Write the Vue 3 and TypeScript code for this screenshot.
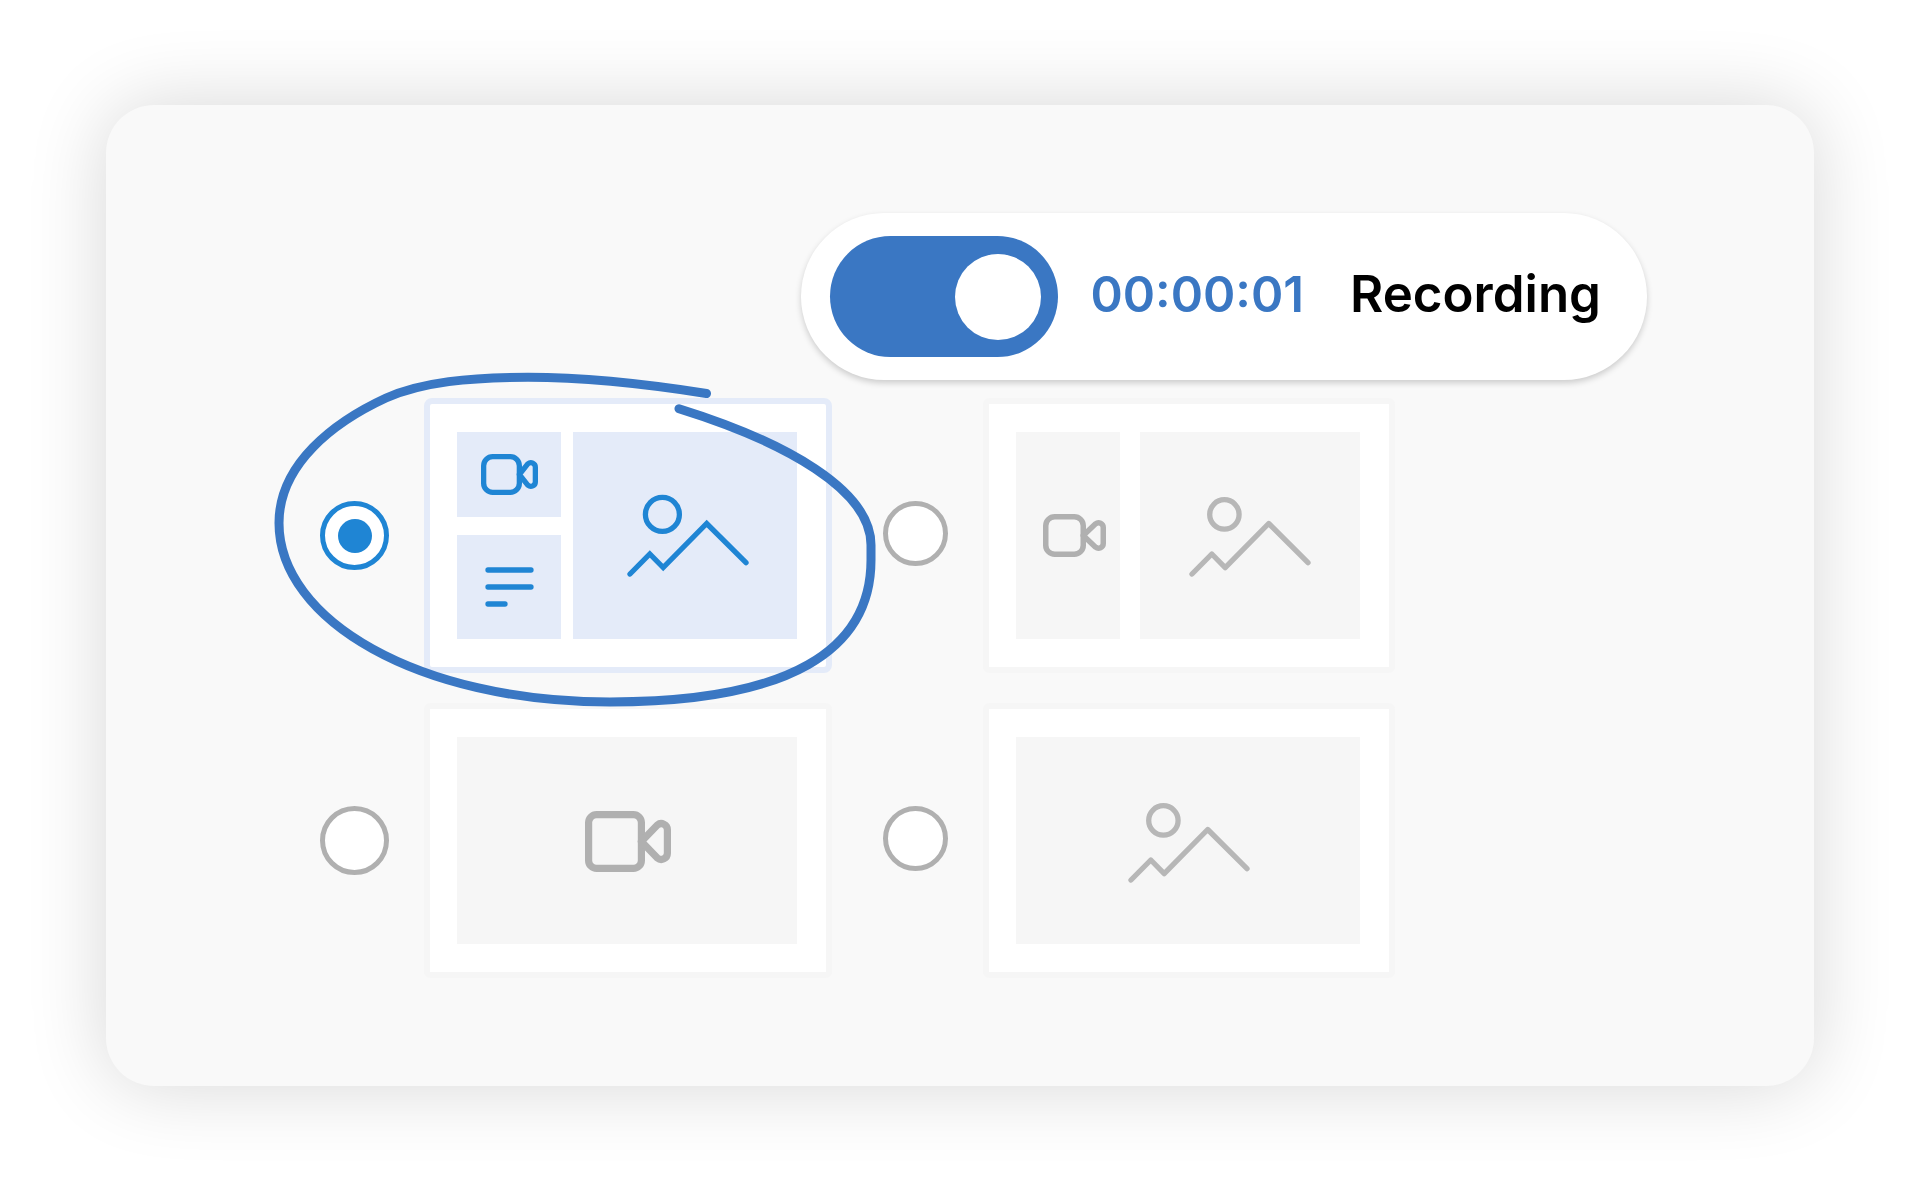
<script setup lang="ts">
import { ref } from 'vue'

type PaneKind = 'video' | 'text' | 'image'

interface VideoShape {
  width: number
  height: number
  body: number
  radius: number
  lens: number
  stroke: number
}

interface Pane {
  kind: PaneKind
  area: string
  video?: VideoShape
}

interface LayoutOption {
  id: string
  label: string
  shape: string
  panes: Pane[]
}

const smallVideo: VideoShape = { width: 57, height: 41, body: 41, radius: 9, lens: 29, stroke: 5.3 }
const mediumVideo: VideoShape = { width: 63, height: 43, body: 43, radius: 9, lens: 31, stroke: 5.5 }
const largeVideo: VideoShape = { width: 86, height: 61, body: 60, radius: 8, lens: 43, stroke: 7.2 }

const options: LayoutOption[] = [
  {
    id: 'camera-notes-slides',
    label: 'Camera, notes and slides',
    shape: 'stacked',
    panes: [
      { kind: 'video', area: 'video', video: smallVideo },
      { kind: 'text', area: 'text' },
      { kind: 'image', area: 'image' },
    ],
  },
  {
    id: 'camera-slides',
    label: 'Camera and slides',
    shape: 'split',
    panes: [
      { kind: 'video', area: 'video', video: mediumVideo },
      { kind: 'image', area: 'image' },
    ],
  },
  {
    id: 'camera',
    label: 'Camera only',
    shape: 'single',
    panes: [{ kind: 'video', area: 'main', video: largeVideo }],
  },
  {
    id: 'slides',
    label: 'Slides only',
    shape: 'single',
    panes: [{ kind: 'image', area: 'main' }],
  },
]

const selected = ref('camera-notes-slides')
const recording = ref(true)

// Outline of the camera lens: a triangle with its two outer corners rounded.
function lensPath(v: VideoShape): string {
  const tip = v.body - v.stroke / 2
  const right = v.width - v.stroke / 2
  const mid = v.height / 2
  const top = mid - v.lens / 2 + v.stroke / 2
  const bottom = mid + v.lens / 2 - v.stroke / 2
  const r = v.stroke * 0.85
  return (
    `M${tip} ${mid}L${right - 1.64 * r} ${top + 0.23 * r}` +
    `A${r} ${r} 0 0 1 ${right} ${top + r}V${bottom - r}` +
    `A${r} ${r} 0 0 1 ${right - 1.64 * r} ${bottom - 0.23 * r}Z`
  )
}
</script>

<template>
  <main class="card">
    <div class="recorder">
      <input
        id="record-switch"
        v-model="recording"
        class="switch"
        type="checkbox"
        role="switch"
      />
      <div class="status">
        <time class="timer">00:00:01</time>
        <label class="caption" for="record-switch">Recording</label>
      </div>
    </div>

    <form class="layouts">
      <div
        v-for="option in options"
        :key="option.id"
        class="option"
        :class="{ active: option.id === selected }"
      >
        <input
          :id="option.id"
          v-model="selected"
          class="radio"
          type="radio"
          name="layout"
          :value="option.id"
          :aria-label="option.label"
        />
        <label class="frame" :class="option.shape" :for="option.id">
          <span
            v-for="pane in option.panes"
            :key="pane.area"
            class="pane"
            :class="pane.area"
          >
            <svg
              v-if="pane.kind === 'video' && pane.video"
              class="icon"
              :width="pane.video.width"
              :height="pane.video.height"
              :viewBox="`0 0 ${pane.video.width} ${pane.video.height}`"
              :stroke-width="pane.video.stroke"
              aria-hidden="true"
            >
              <rect
                :x="pane.video.stroke / 2"
                :y="pane.video.stroke / 2"
                :width="pane.video.body - pane.video.stroke"
                :height="pane.video.height - pane.video.stroke"
                :rx="pane.video.radius"
              />
              <path :d="lensPath(pane.video)" stroke-linejoin="round" />
            </svg>
            <svg
              v-else-if="pane.kind === 'text'"
              class="icon"
              width="49"
              height="40"
              viewBox="0 0 49 40"
              stroke-width="5.3"
              stroke-linecap="round"
              aria-hidden="true"
            >
              <path d="M3 3H46M3 20H46M3 37H20" />
            </svg>
            <svg
              v-else
              class="icon scenery"
              width="122"
              height="83"
              viewBox="0 0 122 83"
              stroke-width="5.3"
              stroke-linecap="round"
              aria-hidden="true"
            >
              <circle cx="35.4" cy="20.4" :r="option.id === selected ? 17 : 14.7" />
              <path d="M3 80L22.8 60L36.2 73.6L79.7 29.5L119 68.7" />
            </svg>
          </span>
        </label>
        <svg
          v-if="option.id === selected"
          class="marker"
          width="602"
          height="335"
          viewBox="274 372 602 335"
          aria-hidden="true"
        >
          <path
            d="M706.5 393.5C640 383 580 377.3 528 377.3C470 377.3 422 382 386 398C334 422 279 464 279 523C279 620 418 702 610 702C790 702 871 650 871 560V545C871 490 786 442 679 408.7"
          />
        </svg>
      </div>
    </form>
  </main>
</template>

<style>
body {
  margin: 0;
  background: #fff;
}
</style>

<style scoped>
* {
  box-sizing: border-box;
}

.card {
  display: flex;
  flex-direction: column;
  gap: 18px;
  margin: 105px 106px;
  padding: 108px 167px 108px 214px;
  border-radius: 48px;
  background: #f9f9f9;
  box-shadow: 0 0 80px rgba(0, 0, 0, 0.16);
  font-family: Inter, 'Liberation Sans', sans-serif;
}

.recorder {
  display: flex;
  align-items: center;
  align-self: flex-end;
  gap: 32px;
  padding: 23px 46px 23px 29px;
  border-radius: 84px;
  background: #fff;
  box-shadow: 0 3px 6px rgba(0, 0, 0, 0.18);
}

.switch {
  display: flex;
  align-items: center;
  justify-content: flex-end;
  flex: none;
  appearance: none;
  width: 228px;
  height: 121px;
  margin: 0;
  padding: 0 17px;
  border-radius: 61px;
  background: #b0b0b0;
}

.switch::before {
  content: '';
  width: 86px;
  height: 86px;
  border-radius: 50%;
  background: #fff;
}

.switch:checked {
  background: #3a77c3;
}

.switch:not(:checked) {
  justify-content: flex-start;
}

.status {
  display: flex;
  align-items: baseline;
  gap: 46px;
  padding-bottom: 5px;
  font-weight: 600;
  line-height: 62px;
}

.timer {
  color: #3a77c3;
  font-size: 49px;
}

.caption {
  color: #000;
  font-size: 51px;
}

.layouts {
  display: grid;
  grid-template-columns: 512px 512px;
  gap: 30px 51px;
}

.option {
  position: relative;
  display: flex;
  align-items: center;
  gap: 35px;
}

.radio {
  display: grid;
  place-items: center;
  flex: none;
  appearance: none;
  width: 69px;
  height: 69px;
  margin: 0;
  border: 5px solid #b0b0b0;
  border-radius: 50%;
  background: #fff;
}

.option:nth-child(even) .radio {
  width: 65px;
  height: 65px;
  margin-bottom: 4px;
}

.radio:checked {
  border-color: #1f85d4;
}

.radio:checked::before {
  content: '';
  width: 34px;
  height: 34px;
  border-radius: 50%;
  background: #1f85d4;
}

.frame {
  display: grid;
  flex: 1;
  height: 275px;
  padding: 28px 29px 28px 27px;
  border: 6px solid #f6f6f6;
  border-radius: 6px;
  background: #fff;
}

.active .frame {
  border-color: #e4ebf9;
  border-radius: 8px;
}

.stacked {
  grid-template: 'video image' 85fr 'text image' 103fr / 104fr 224fr;
  gap: 18px 12px;
}

.split {
  grid-template: 'video image' 1fr / 103fr 219fr;
  gap: 20px;
}

.pane {
  display: flex;
  align-items: center;
  justify-content: center;
  background: #f6f6f6;
}

.active .pane {
  background: #e4ebf9;
}

.video {
  grid-area: video;
}

.text {
  grid-area: text;
}

.image {
  grid-area: image;
}

.main {
  padding: 2px 0 0 2px;
}

.split .video {
  justify-content: flex-end;
  padding-right: 14px;
}

.stacked .image {
  padding-left: 5px;
}

.icon {
  flex: none;
  fill: none;
  stroke: #b0b0b0;
}

.scenery {
  stroke: #b7b7b7;
  stroke-linejoin: round;
}

.active .icon {
  stroke: #1f85d4;
  stroke-linejoin: miter;
}

.marker {
  position: absolute;
  z-index: 1;
  top: -26px;
  left: -46px;
  fill: none;
  stroke: #3a77c3;
  stroke-width: 9;
  stroke-linecap: round;
  pointer-events: none;
}
</style>
